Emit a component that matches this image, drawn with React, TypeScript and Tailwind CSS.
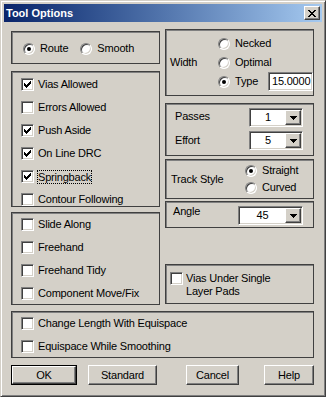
import type { ReactNode } from "react";

const SUNKEN =
    "border border-t-[#808080] border-l-[#808080] border-b-white border-r-white shadow-[inset_1px_1px_0_#404040,inset_-1px_-1px_0_#d4d0c8]";
const RAISED =
    "border border-t-white border-l-white border-b-[#404040] border-r-[#404040] shadow-[inset_-1px_-1px_0_#808080,inset_1px_1px_0_#d4d0c8]";
const GROUP = "border border-[#404040] shadow-[inset_1px_1px_0_#808080]";

const CHECK = ["......X", ".....XX", "X...XXX", "XX.XXX.", "XXXXX..", ".XXX...", "..X...."];
const CROSS = ["XX....XX", ".XX..XX.", "..XXXX..", "...XX...", "..XXXX..", ".XX..XX.", "XX....XX"];
const ARROW = ["XXXXXXX", ".XXXXX.", "..XXX..", "...X..."];

function Pixels({rows}: {rows: string[]}) {
    return (
        <svg width={rows[0].length} height={rows.length} shapeRendering="crispEdges" className="block">
            {rows.flatMap((r, y) =>
                [...r].map((c, x) =>
                    c === "X" ? <rect key={`${x}-${y}`} x={x} y={y} width={1} height={1} fill="#000"/> : null
                )
            )}
        </svg>
    );
}

function Check({checked, label, focus}: {checked?: boolean; label: string; focus?: boolean}) {
    return (
        <div className="h-[23px] flex items-center gap-[4px]">
            <div className={`w-[13px] h-[13px] bg-white flex items-center justify-center shrink-0 ${SUNKEN}`}>
                {checked && <Pixels rows={CHECK}/>}
            </div>
            <span className={focus ? "outline outline-1 outline-dotted outline-black leading-[12px]" : ""}>{label}</span>
        </div>
    );
}

function Radio({checked}: {checked?: boolean}) {
    return (
        <div
            className="w-[12px] h-[12px] rounded-full bg-white shrink-0 flex items-center justify-center border border-t-[#808080] border-l-[#808080] border-b-white border-r-white shadow-[inset_1px_1px_0_#404040,inset_-1px_-1px_0_#d4d0c8]">
            {checked && <div className="w-[4px] h-[4px] rounded-full bg-black"/>}
        </div>
    );
}

function Combo({value, className = ""}: {value: string; className?: string}) {
    return (
        <div className={`h-[19px] bg-white flex p-[1px] ${SUNKEN} ${className}`}>
            <div className="flex-1 flex items-center justify-center leading-none">{value}</div>
            <div className={`w-[16px] h-full bg-[#d4d0c8] flex items-center justify-center ${RAISED}`}>
                <Pixels rows={ARROW}/>
            </div>
        </div>
    );
}

function Button({children, def, className = ""}: {children: ReactNode; def?: boolean; className?: string}) {
    const inner = (
        <div className={`w-full h-full flex items-center justify-center ${RAISED}`}>{children}</div>
    );
    return (
        <div className={`h-[20px] ${className}`}>
            {def ? <div className="w-full h-full border border-black">{inner}</div> : inner}
        </div>
    );
}

export default function App() {
    return (
        <div
            className="w-[326px] h-[397px] bg-[#d4d0c8] text-black text-[11px] tracking-[-0.2px] font-['Liberation_Sans',Arial,sans-serif] border border-t-[#d4d0c8] border-l-[#d4d0c8] border-b-[#404040] border-r-[#404040] shadow-[inset_1px_1px_0_#fff,inset_-1px_-1px_0_#808080] p-[3px] flex flex-col">
            {/* title bar */}
            <div className="h-[18px] bg-gradient-to-r from-[#0a246a] to-[#a6caf0] flex items-center pl-[2px] pr-[2px]">
                <span className="text-white font-bold text-[11px] tracking-normal">Tool Options</span>
                <div className={`ml-auto w-[16px] h-[14px] bg-[#d4d0c8] flex items-center justify-center ${RAISED}`}>
                    <Pixels rows={CROSS}/>
                </div>
            </div>

            <div className="pl-[7px] pr-[8px] pt-[7px]">
                <div className="flex gap-[5px] items-start">
                    {/* left column */}
                    <div className="w-[149px] mt-[2px] flex flex-col">
                        <div className={`h-[33px] flex items-center pl-[11px] pt-[2px] ${GROUP}`}>
                            <Radio checked/>
                            <span className="ml-[5px]">Route</span>
                            <div className="ml-[12px]"><Radio/></div>
                            <span className="ml-[5px]">Smooth</span>
                        </div>
                        <div className={`h-[136px] mt-[7px] pl-[9px] pt-[1px] ${GROUP}`}>
                            <Check checked label="Vias Allowed"/>
                            <Check label="Errors Allowed"/>
                            <Check checked label="Push Aside"/>
                            <Check checked label="On Line DRC"/>
                            <Check checked focus label="Springback"/>
                            <Check label="Contour Following"/>
                        </div>
                        <div className={`h-[93px] mt-[5px] pl-[9px] ${GROUP}`}>
                            <Check label="Slide Along"/>
                            <Check label="Freehand"/>
                            <Check label="Freehand Tidy"/>
                            <Check label="Component Move/Fix"/>
                        </div>
                    </div>

                    {/* right column */}
                    <div className="w-[149px] flex flex-col">
                        <div className={`h-[67px] flex items-center pl-[4px] ${GROUP}`}>
                            <span className="w-[53px]">Width</span>
                            <div className="flex flex-col">
                                <div className="h-[19px] flex items-center gap-[5px]"><Radio/>Necked</div>
                                <div className="h-[19px] flex items-center gap-[5px]"><Radio/>Optimal</div>
                                <div className="h-[19px] flex items-center gap-[5px]">
                                    <Radio checked/>
                                    <span className="w-[28px]">Type</span>
                                    <div className={`w-[45px] h-[19px] bg-white flex items-center pl-[3px] ${SUNKEN}`}>15.0000</div>
                                </div>
                            </div>
                        </div>

                        <div className={`h-[53px] mt-[7px] pl-[9px] pt-[4px] flex flex-col gap-[4px] ${GROUP}`}>
                            <div className="flex items-center">
                                <span className="w-[74px] -mt-[3px]">Passes</span>
                                <Combo value="1" className="w-[54px]"/>
                            </div>
                            <div className="flex items-center">
                                <span className="w-[74px] -mt-[1px]">Effort</span>
                                <Combo value="5" className="w-[54px]"/>
                            </div>
                        </div>

                        <div className={`h-[40px] mt-[3px] pl-[5px] flex items-center ${GROUP}`}>
                            <span className="w-[74px]">Track Style</span>
                            <div className="flex flex-col">
                                <div className="h-[17px] flex items-center gap-[5px]"><Radio checked/>Straight</div>
                                <div className="h-[17px] flex items-center gap-[5px]"><Radio/>Curved</div>
                            </div>
                        </div>

                        <div className={`h-[27px] mt-[2px] pl-[7px] flex items-start ${GROUP}`}>
                            <span className="w-[65px] h-[19px] flex items-center">Angle</span>
                            <Combo value="45" className="w-[65px] mt-[4px]"/>
                        </div>

                        <div className={`h-[40px] mt-[36px] pl-[4px] pt-[7px] flex items-start gap-[3px] ${GROUP}`}>
                            <div className={`w-[13px] h-[13px] bg-white shrink-0 ${SUNKEN}`}/>
                            <span className="leading-[13px]">Vias Under Single<br/>Layer Pads</span>
                        </div>
                    </div>
                </div>

                <div className={`h-[47px] mt-[6px] pl-[9px] ${GROUP}`}>
                    <Check label="Change Length With Equispace"/>
                    <Check label="Equispace While Smoothing"/>
                </div>

                <div className="flex mt-[7px]">
                    <Button def className="w-[66px]">OK</Button>
                    <Button className="w-[69px] ml-[11px]">Standard</Button>
                    <Button className="w-[53px] ml-[29px]">Cancel</Button>
                    <Button className="w-[50px] ml-[25px]">Help</Button>
                </div>
            </div>
        </div>
    );
}
